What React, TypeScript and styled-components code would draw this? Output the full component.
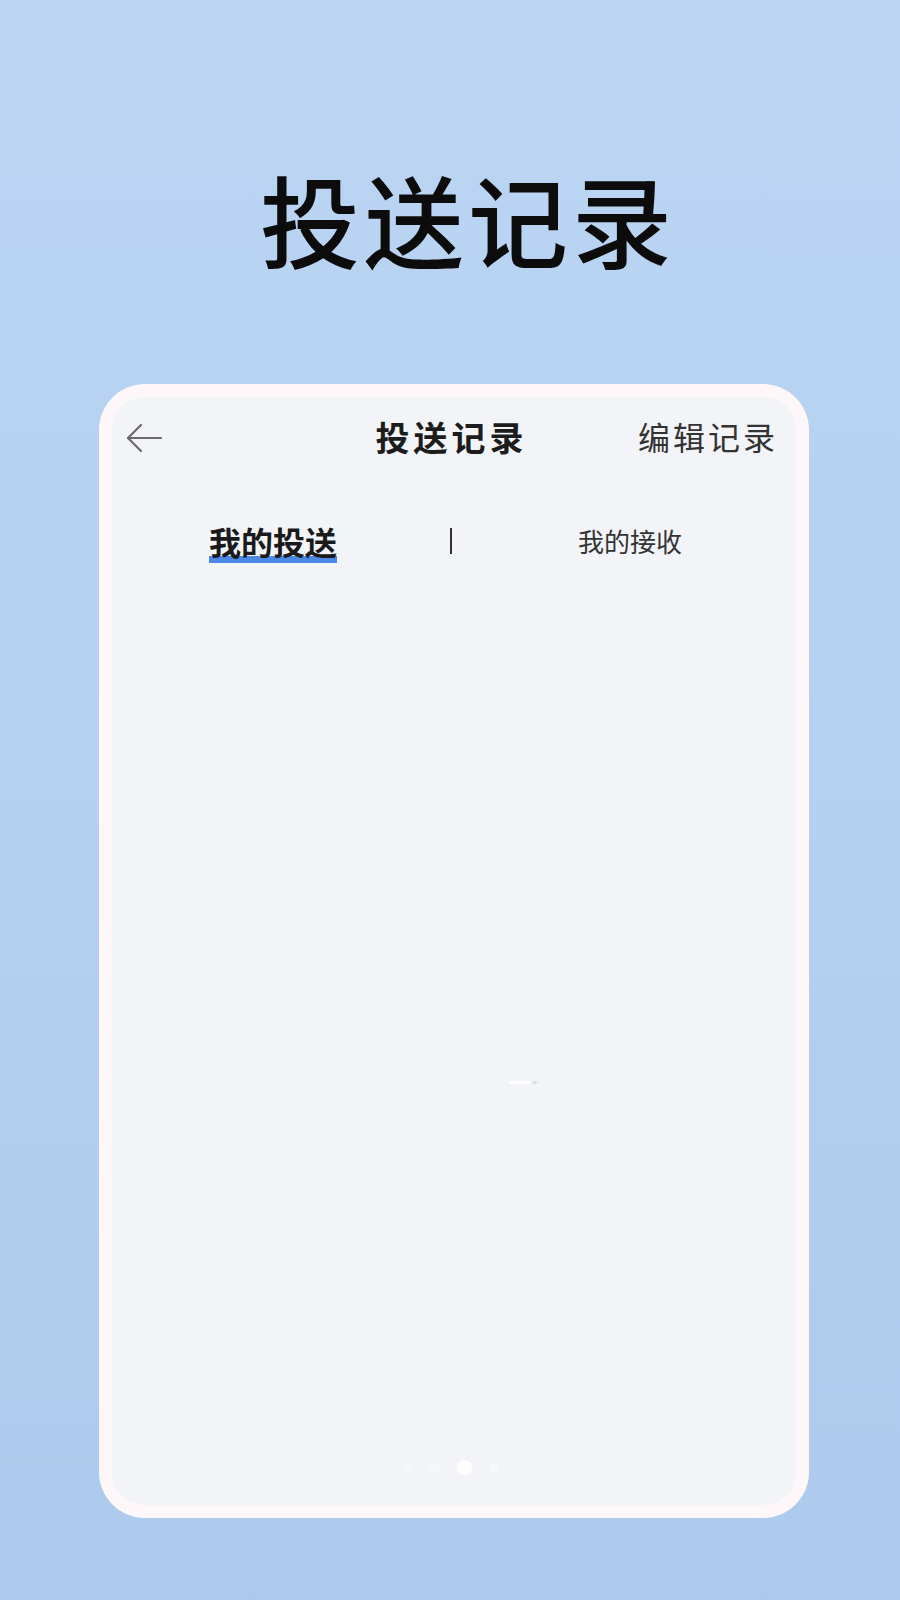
import React from 'react';
import styled, { createGlobalStyle } from 'styled-components';

const GlobalStyle = createGlobalStyle`
  html, body {
    margin: 0;
    padding: 0;
  }
  body {
    font-family: "Noto Sans CJK SC", "Noto Sans", sans-serif;
    color: #222;
  }
`;

const Page = styled.div`
  width: 900px;
  height: 1600px;
  box-sizing: border-box;
  padding-left: 8px;
  background: linear-gradient(180deg, #bbd5f3 0%, #b5d0f0 50%, #adcaec 100%);
  display: flex;
  flex-direction: column;
  align-items: center;
  overflow: hidden;
`;

const HeroTitle = styled.h1`
  margin: 0;
  padding: 158px 0 0 28px;
  font-size: 100px;
  line-height: 120px;
  font-weight: 500;
  letter-spacing: 4px;
  color: #0c0c0c;
`;

const Frame = styled.div`
  margin-top: 106px;
  width: 710px;
  height: 1134px;
  box-sizing: border-box;
  padding: 13px;
  background: #fdf7f9;
  border-radius: 46px;
  display: flex;
`;

const Screen = styled.div`
  flex: 1;
  background: #f2f4f8;
  border-radius: 32px;
  display: flex;
  flex-direction: column;
`;

const Header = styled.div`
  height: 82px;
  display: grid;
  grid-template-columns: 1fr auto 1fr;
  align-items: center;
  padding: 0 18px 0 13px;
`;

const BackButton = styled.div`
  justify-self: start;
  display: flex;
  color: #6b6b6b;
`;

const HeaderTitle = styled.div`
  margin-top: -4px;
  font-size: 34px;
  font-weight: 700;
  letter-spacing: 4px;
  color: #1c1c1c;
`;

const HeaderAction = styled.div`
  justify-self: end;
  margin-top: -4px;
  font-size: 32px;
  letter-spacing: 3px;
  color: #333;
`;

const Tabs = styled.div`
  margin-top: 42px;
  height: 40px;
  display: flex;
  align-items: center;
  padding-left: 97px;
`;

const Tab = styled.div<{ active?: boolean }>`
  position: relative;
  isolation: isolate;
  font-size: ${p => (p.active ? '32px' : '26px')};
  font-weight: ${p => (p.active ? 700 : 400)};
  color: ${p => (p.active ? '#1a1a1a' : '#333')};
  line-height: 40px;

  &::after {
    content: '';
    display: ${p => (p.active ? 'block' : 'none')};
    position: absolute;
    left: 0;
    right: 0;
    bottom: -2px;
    height: 7px;
    background: #4a89e6;
    z-index: -1;
  }
`;

const TabLabel = styled.span`
  position: relative;
  z-index: 1;
`;

const Divider = styled.div`
  width: 2px;
  height: 26px;
  margin: 0 126px 0 113px;
  background: #333;
`;

const Body = styled.div`
  flex: 1;
  display: flex;
  flex-direction: column;
  align-items: center;
`;

const Loader = styled.div`
  margin-top: 520px;
  margin-left: 140px;
  width: 30px;
  height: 3px;
  border-radius: 2px;
  background: linear-gradient(90deg, #ffffff 0%, #ffffff 70%, #d8dce3 85%, #f2f4f8 100%);
`;

const Dots = styled.div`
  margin-top: auto;
  margin-bottom: 30px;
  margin-left: -6px;
  display: flex;
  align-items: center;
  gap: 17px;
`;

const Dot = styled.div<{ active?: boolean }>`
  width: ${p => (p.active ? '15px' : '10px')};
  height: ${p => (p.active ? '15px' : '10px')};
  border-radius: 50%;
  background: ${p => (p.active ? '#ffffff' : '#f6f7fa')};
`;

const App: React.FC = () => {
  return (
    <Page>
      <GlobalStyle />
      <HeroTitle>投送记录</HeroTitle>
      <Frame>
        <Screen>
          <Header>
            <BackButton>
              <svg width="38" height="30" viewBox="0 0 38 30" fill="none" stroke="currentColor" strokeWidth="2.2" strokeLinecap="round" strokeLinejoin="round">
                <path d="M36 15 H3" />
                <path d="M16 2 L3 15 L16 28" />
              </svg>
            </BackButton>
            <HeaderTitle>投送记录</HeaderTitle>
            <HeaderAction>编辑记录</HeaderAction>
          </Header>

          <Tabs>
            <Tab active>
              <TabLabel>我的投送</TabLabel>
            </Tab>
            <Divider />
            <Tab>
              <TabLabel>我的接收</TabLabel>
            </Tab>
          </Tabs>

          <Body>
            <Loader />
            <Dots>
              <Dot />
              <Dot />
              <Dot active />
              <Dot />
            </Dots>
          </Body>
        </Screen>
      </Frame>
    </Page>
  );
};

export default App;
